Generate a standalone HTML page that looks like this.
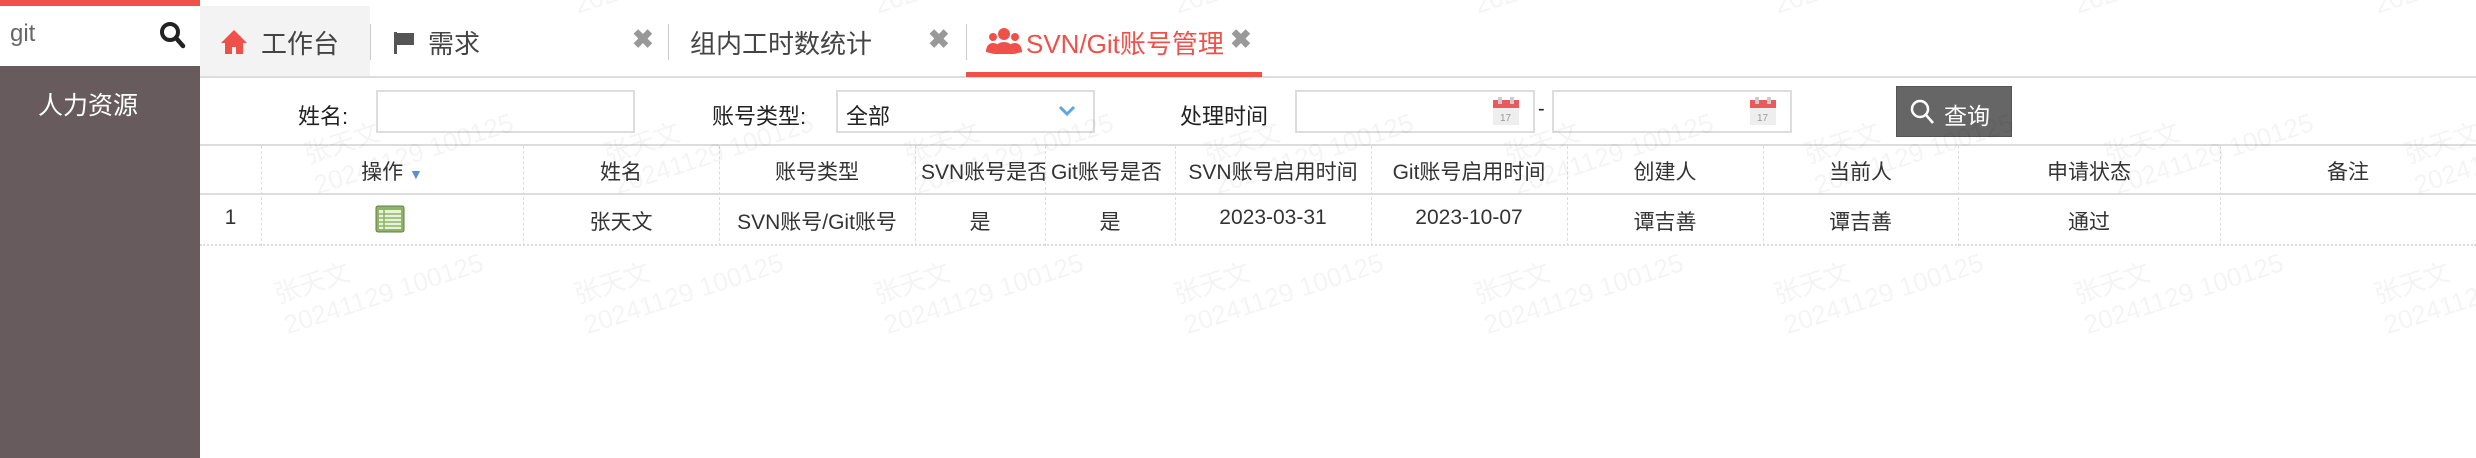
<!DOCTYPE html>
<html><head><meta charset="utf-8"><style>
*{margin:0;padding:0;box-sizing:border-box}
body{width:2476px;height:458px;overflow:hidden;background:#fff;font-family:"Liberation Sans","Noto Sans CJK SC",sans-serif;position:relative;color:#333}
.a{position:absolute}
.side{left:0;top:0;width:200px;height:458px;background:#675b5e}
.wm{color:rgba(0,0,0,0.045);font-size:26px;transform:rotate(-18deg);transform-origin:left top;white-space:nowrap;line-height:32px}
.t{font-size:26px;top:24px;color:#444}
.x{font-size:26px;color:#999;top:24px;font-weight:bold}
.sep{width:1px;height:36px;background:#ccc;top:24px}
.lbl{font-size:22px;color:#222;top:99px}
.inp{border:2px solid #ddd;background:#fff}
.vl{border-left:1px dashed #ddd;top:146px;height:100px}
.c{font-size:21px;text-align:center;color:#333;white-space:nowrap;overflow:hidden}
</style></head><body>
<div class="a side"></div>
<div class="a" style="left:0;top:0;width:200px;height:6px;background:#f0504a"></div>
<div class="a" style="left:0;top:6px;width:200px;height:60px;background:#fff"></div>
<div class="a" style="left:10px;top:20px;font-size:24px;color:#666">git</div>
<svg class="a" style="left:158px;top:20px" width="28" height="30" viewBox="0 0 28 30"><circle cx="12" cy="12" r="8" fill="none" stroke="#222" stroke-width="4"/><path d="M18 18l7 8" stroke="#222" stroke-width="4.5" stroke-linecap="round"/></svg>
<div class="a" style="left:38px;top:86px;font-size:25px;color:#fff">人力资源</div>

<div class="a" style="left:200px;top:6px;width:170px;height:72px;background:#f3f3f3"></div>
<div class="a" style="left:200px;top:76px;width:2276px;height:2px;background:#ddd"></div>
<div class="a" style="left:966px;top:72px;width:296px;height:5px;background:#f0504a"></div>
<svg class="a" style="left:220px;top:28px" width="28" height="28" viewBox="0 0 28 28"><path d="M14 2L1 15h4v11h7v-7h4v7h7V15h4z" fill="#f0504a"/></svg>
<div class="a t" style="left:261px">工作台</div>
<div class="a sep" style="left:370px"></div>
<svg class="a" style="left:392px;top:30px" width="26" height="26" viewBox="0 0 26 26"><rect x="2" y="2" width="3" height="22" fill="#555"/><path d="M5 3h17v12H5z" fill="#555"/></svg>
<div class="a t" style="left:428px">需求</div>
<div class="a x" style="left:632px">✖</div>
<div class="a sep" style="left:668px"></div>
<div class="a t" style="left:690px">组内工时数统计</div>
<div class="a x" style="left:928px">✖</div>
<div class="a sep" style="left:966px"></div>
<svg class="a" style="left:986px;top:26px" width="36" height="30" viewBox="0 0 36 30"><circle cx="18" cy="8" r="6" fill="#f0504a"/><circle cx="7" cy="11" r="4" fill="#f0504a"/><circle cx="29" cy="11" r="4" fill="#f0504a"/><path d="M8 28c0-8 4-12 10-12s10 4 10 12z" fill="#f0504a"/><path d="M0 26c0-6 3-9 7-9s5 2 5 2c-3 3-4 6-4 9z M36 26c0-6-3-9-7-9s-5 2-5 2c3 3 4 6 4 9z" fill="#f0504a"/></svg>
<div class="a t" style="left:1026px;color:#f0504a;width:208px;overflow:hidden;white-space:nowrap">SVN/Git账号管理</div>
<div class="a x" style="left:1230px">✖</div>

<div class="a lbl" style="left:298px">姓名:</div>
<div class="a inp" style="left:376px;top:90px;width:259px;height:43px"></div>
<div class="a lbl" style="left:712px">账号类型:</div>
<div class="a inp" style="left:836px;top:90px;width:259px;height:43px"></div>
<div class="a" style="left:846px;top:99px;font-size:22px;color:#222">全部</div>
<svg class="a" style="left:1058px;top:104px" width="18" height="14" viewBox="0 0 18 14"><path d="M2 3l7 7 7-7" fill="none" stroke="#5aa6e6" stroke-width="3"/></svg>
<div class="a lbl" style="left:1180px">处理时间</div>
<div class="a inp" style="left:1295px;top:90px;width:240px;height:43px"></div>
<div class="a inp" style="left:1552px;top:90px;width:240px;height:43px"></div>
<div class="a" style="left:1538px;top:98px;font-size:20px;color:#222">-</div>
<svg class="a" style="left:1492px;top:96px" width="28" height="30" viewBox="0 0 28 30"><rect x="1" y="4" width="26" height="25" fill="#eee"/><rect x="1" y="4" width="26" height="8" fill="#ea5a5a"/><rect x="6" y="1" width="4" height="7" fill="#ccc"/><rect x="18" y="1" width="4" height="7" fill="#ccc"/><text x="8" y="25" font-size="10" fill="#999" font-family="Liberation Sans">17</text></svg>
<svg class="a" style="left:1749px;top:96px" width="28" height="30" viewBox="0 0 28 30"><rect x="1" y="4" width="26" height="25" fill="#eee"/><rect x="1" y="4" width="26" height="8" fill="#ea5a5a"/><rect x="6" y="1" width="4" height="7" fill="#ccc"/><rect x="18" y="1" width="4" height="7" fill="#ccc"/><text x="8" y="25" font-size="10" fill="#999" font-family="Liberation Sans">17</text></svg>
<div class="a" style="left:1896px;top:86px;width:116px;height:51px;background:#666;border:1px solid #555"></div>
<svg class="a" style="left:1910px;top:99px" width="26" height="28" viewBox="0 0 26 28"><circle cx="10" cy="10" r="8" fill="none" stroke="#fff" stroke-width="2.5"/><path d="M16 16l7 8" stroke="#fff" stroke-width="2.5"/></svg>
<div class="a" style="left:1944px;top:97px;font-size:23px;color:#fff">查询</div>

<div class="a" style="left:200px;top:144px;width:2276px;height:2px;background:#ddd"></div>
<div class="a" style="left:200px;top:193px;width:2276px;height:2px;background:#ddd"></div>
<div class="a" style="left:200px;top:244px;width:2276px;border-top:2px dotted #ddd"></div>
<div class="a vl" style="left:261px"></div><div class="a vl" style="left:523px"></div><div class="a vl" style="left:719px"></div><div class="a vl" style="left:915px"></div><div class="a vl" style="left:1045px"></div><div class="a vl" style="left:1175px"></div><div class="a vl" style="left:1371px"></div><div class="a vl" style="left:1567px"></div><div class="a vl" style="left:1763px"></div><div class="a vl" style="left:1958px"></div><div class="a vl" style="left:2220px"></div>

<div class="a c" style="left:261px;width:262px;top:156px">操作 <span style="color:#5a8fd0;font-size:14px">▼</span></div>
<div class="a c" style="left:523px;width:196px;top:156px">姓名</div>
<div class="a c" style="left:719px;width:196px;top:156px">账号类型</div>
<div class="a c" style="left:915px;width:130px;top:156px;text-align:left;padding-left:6px">SVN账号是否</div>
<div class="a c" style="left:1045px;width:130px;top:156px;text-align:left;padding-left:6px">Git账号是否</div>
<div class="a c" style="left:1175px;width:196px;top:156px">SVN账号启用时间</div>
<div class="a c" style="left:1371px;width:196px;top:156px">Git账号启用时间</div>
<div class="a c" style="left:1567px;width:196px;top:156px">创建人</div>
<div class="a c" style="left:1763px;width:195px;top:156px">当前人</div>
<div class="a c" style="left:1958px;width:262px;top:156px">申请状态</div>
<div class="a c" style="left:2220px;width:256px;top:156px">备注</div>

<div class="a c" style="left:200px;width:61px;top:206px">1</div>
<svg class="a" style="left:375px;top:205px" width="30" height="28" viewBox="0 0 30 28"><rect x="1" y="1" width="28" height="26" rx="2" fill="#8fb36a" stroke="#5f7f3f"/><rect x="4" y="5" width="22" height="19" fill="#e8f2d8"/><path d="M4 9h22M4 13h22M4 17h22M4 21h22M9 5v19" stroke="#8fb36a" stroke-width="1.5"/></svg>
<div class="a c" style="left:523px;width:196px;top:206px">张天文</div>
<div class="a c" style="left:719px;width:196px;top:206px">SVN账号/Git账号</div>
<div class="a c" style="left:915px;width:130px;top:206px">是</div>
<div class="a c" style="left:1045px;width:130px;top:206px">是</div>
<div class="a c" style="left:1175px;width:196px;top:206px">2023-03-31</div>
<div class="a c" style="left:1371px;width:196px;top:206px">2023-10-07</div>
<div class="a c" style="left:1567px;width:196px;top:206px">谭吉善</div>
<div class="a c" style="left:1763px;width:195px;top:206px">谭吉善</div>
<div class="a c" style="left:1958px;width:262px;top:206px">通过</div>

<div class="a wm" style="left:270px;top:280px">张天文<br>20241129 100125</div>
<div class="a wm" style="left:570px;top:280px">张天文<br>20241129 100125</div>
<div class="a wm" style="left:870px;top:280px">张天文<br>20241129 100125</div>
<div class="a wm" style="left:1170px;top:280px">张天文<br>20241129 100125</div>
<div class="a wm" style="left:1470px;top:280px">张天文<br>20241129 100125</div>
<div class="a wm" style="left:1770px;top:280px">张天文<br>20241129 100125</div>
<div class="a wm" style="left:2070px;top:280px">张天文<br>20241129 100125</div>
<div class="a wm" style="left:2370px;top:280px">张天文<br>20241129 100125</div>
<div class="a wm" style="left:570px;top:-10px">20241129</div>
<div class="a wm" style="left:870px;top:-10px">20241129</div>
<div class="a wm" style="left:1170px;top:-10px">20241129</div>
<div class="a wm" style="left:1470px;top:-10px">20241129</div>
<div class="a wm" style="left:1770px;top:-10px">20241129</div>
<div class="a wm" style="left:2070px;top:-10px">20241129</div>
<div class="a wm" style="left:2370px;top:-10px">20241129</div>
<div class="a wm" style="left:300px;top:140px">张天文<br>20241129 100125</div>
<div class="a wm" style="left:600px;top:140px">张天文<br>20241129 100125</div>
<div class="a wm" style="left:900px;top:140px">张天文<br>20241129 100125</div>
<div class="a wm" style="left:1200px;top:140px">张天文<br>20241129 100125</div>
<div class="a wm" style="left:1500px;top:140px">张天文<br>20241129 100125</div>
<div class="a wm" style="left:1800px;top:140px">张天文<br>20241129 100125</div>
<div class="a wm" style="left:2100px;top:140px">张天文<br>20241129 100125</div>
<div class="a wm" style="left:2400px;top:140px">张天文<br>20241129 100125</div>
</body></html>
